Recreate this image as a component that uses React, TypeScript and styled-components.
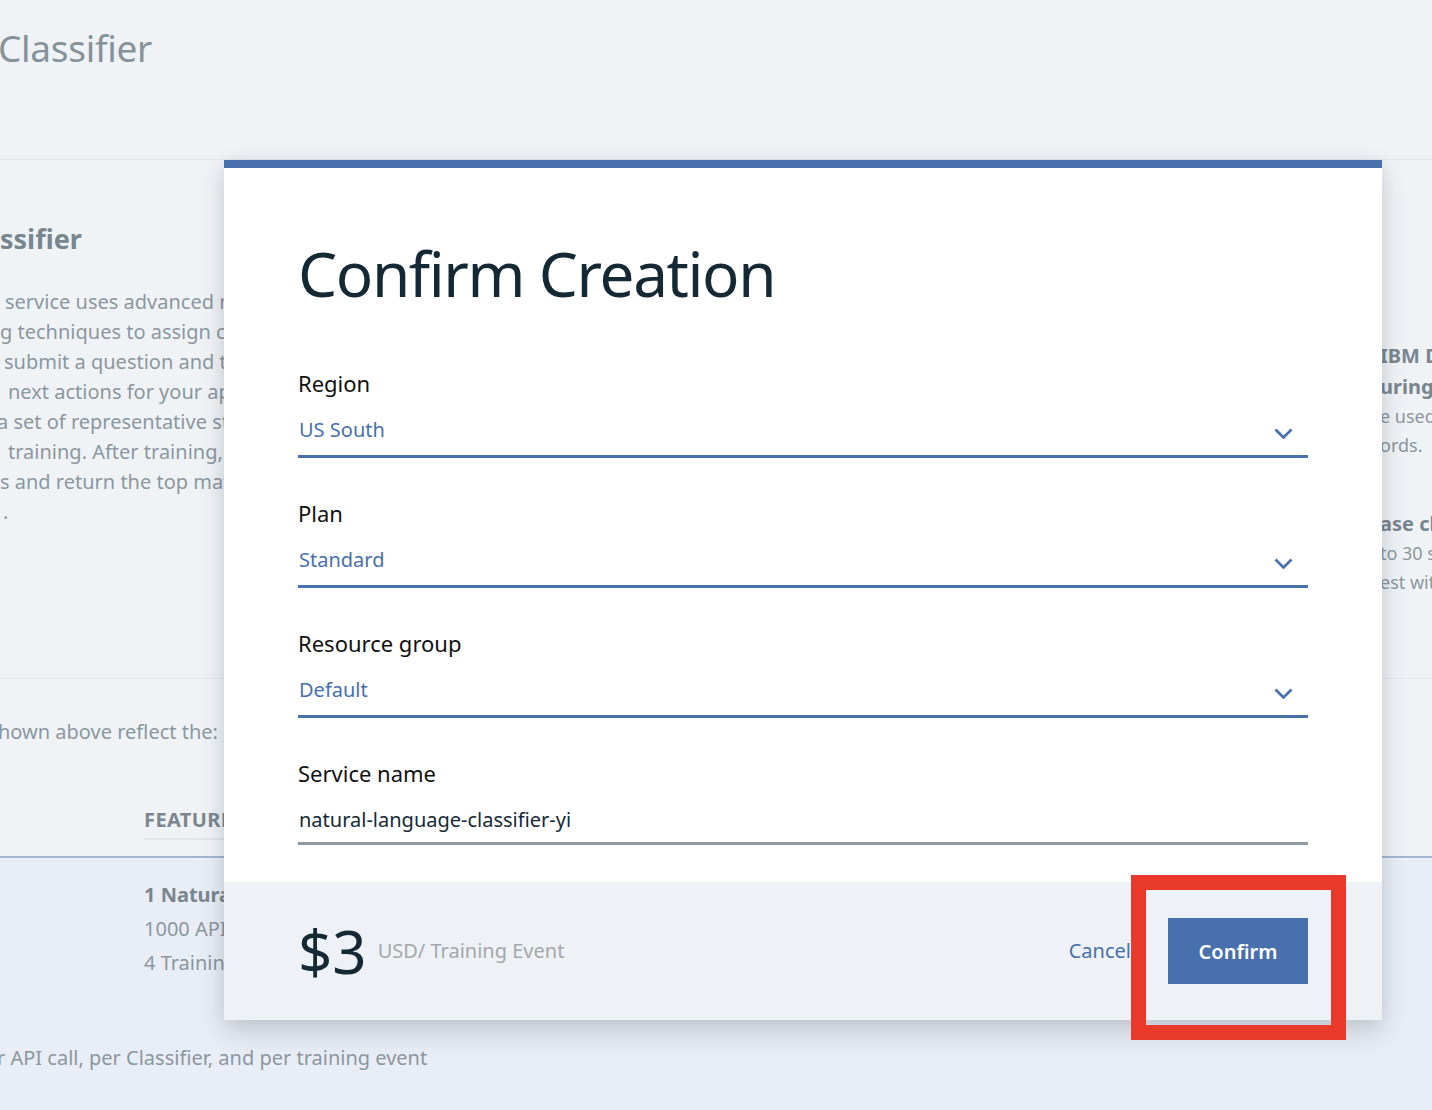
import React from "react";
import styled, { createGlobalStyle } from "styled-components";

const GlobalStyle = createGlobalStyle`
  *, *::before, *::after { box-sizing: border-box; }
  html, body { margin: 0; padding: 0; overflow: hidden; }
  body { font-family: "Noto Sans", "Open Sans", sans-serif; background: #f0f3f6; }
`;

const Page = styled.div`
  position: relative;
  width: 1432px;
  height: 1110px;
  overflow: hidden;
  background: #f0f3f6;
  font-family: "Noto Sans", "Open Sans", sans-serif;
  display: flex;
  flex-direction: column;
`;

const Header = styled.header`
  flex: 0 0 160px;
  padding-top: 23px;
  border-bottom: 1px solid #e2e7eb;
`;

const PageTitle = styled.h1`
  margin: 0 0 0 -2px;
  font-size: 37px;
  line-height: 50px;
  font-weight: 400;
  letter-spacing: -0.3px;
  color: #869299;
  white-space: nowrap;
`;

const Intro = styled.section`
  flex: 0 0 519px;
  display: flex;
  border-bottom: 1px solid #e2e7eb;
`;

const LeftCol = styled.div`
  flex: 0 0 1380px;
  overflow: hidden;
  padding-top: 61px;
`;

const IntroHeading = styled.h2`
  margin: 0 0 30px;
  font-size: 27px;
  line-height: 36px;
  font-weight: 700;
  color: #78868f;
  white-space: nowrap;
`;

const ParaLine = styled.div<{ $indent: number }>`
  margin-left: ${(p) => p.$indent}px;
  font-size: 20px;
  line-height: 30px;
  color: #8b979f;
  white-space: nowrap;
`;

const RightCol = styled.div`
  flex: 1;
  overflow: hidden;
  padding-top: 180px;
  display: flex;
  flex-direction: column;
  gap: 48px;
`;

const Callout = styled.div`
  display: flex;
  flex-direction: column;
`;

const CalloutTitle = styled.div`
  font-size: 20px;
  line-height: 31px;
  font-weight: 700;
  color: #78868f;
  white-space: nowrap;
`;

const CalloutText = styled.div`
  font-size: 18px;
  line-height: 29px;
  color: #8b979f;
  white-space: nowrap;
`;

const Pricing = styled.section`
  flex: 0 0 180px;
  padding-top: 38px;
`;

const PricingIntro = styled.div`
  margin-left: -2px;
  font-size: 20px;
  line-height: 30px;
  color: #8b979f;
  white-space: nowrap;
`;

const TableHead = styled.div`
  margin-top: 58px;
  padding: 0 0 16px 144px;
  border-bottom: 2px solid #a2b5d2;
`;

const HeadCell = styled.div`
  width: 640px;
  padding-bottom: 3px;
  border-bottom: 2px solid #e1e5e9;
  font-size: 20px;
  line-height: 30px;
  font-weight: 700;
  letter-spacing: 0.4px;
  color: #7b8790;
`;

const Lower = styled.section`
  flex: 1;
  background: #e9edf5;
  padding-top: 19px;
`;

const Rows = styled.div`
  padding-left: 144px;
`;

const Row = styled.div<{ $bold?: boolean }>`
  font-size: 20px;
  line-height: 34px;
  font-weight: ${(p) => (p.$bold ? 700 : 400)};
  color: ${(p) => (p.$bold ? "#7b8790" : "#8b979f")};
  white-space: nowrap;
`;

const Note = styled.div`
  margin: 63px 0 0 -3px;
  font-size: 20px;
  line-height: 30px;
  color: #8b979f;
  white-space: nowrap;
`;

const Modal = styled.div`
  position: absolute;
  left: 224px;
  top: 160px;
  width: 1158px;
  background: #ffffff;
  border-top: 8px solid #4870ad;
  box-shadow: 0 12px 24px rgba(40, 50, 60, 0.18), 0 0 16px rgba(40, 50, 60, 0.06);
  font-family: "Noto Sans", "Open Sans", sans-serif;
`;

const ModalBody = styled.div`
  padding: 69px 74px 37px;
  display: flex;
  flex-direction: column;
`;

const ModalHeading = styled.h2`
  margin: 0 0 59px;
  font-size: 62px;
  line-height: 72px;
  font-weight: 400;
  letter-spacing: -1.4px;
  color: #152935;
`;

const Field = styled.div`
  display: flex;
  flex-direction: column;
  margin-bottom: 40px;
  &:last-child { margin-bottom: 0; }
`;

const FieldLabel = styled.div`
  margin-bottom: 17px;
  font-size: 22px;
  line-height: 30px;
  color: #111111;
`;

const FieldBox = styled.div<{ $select?: boolean }>`
  display: flex;
  align-items: center;
  justify-content: space-between;
  padding-bottom: ${(p) => (p.$select ? 10 : 7)}px;
  border-bottom: 3px solid ${(p) => (p.$select ? "#4870ad" : "#8d9aa4")};
`;

const FieldValue = styled.div<{ $select?: boolean }>`
  padding-left: 1px;
  font-size: 20px;
  line-height: 30px;
  color: ${(p) => (p.$select ? "#4870ad" : "#152935")};
`;

const ChevronIcon = styled.svg`
  width: 19px;
  height: 11px;
  margin: 6px 15px 0 0;
`;

const Footer = styled.div`
  height: 138px;
  background: #eef1f5;
  padding: 0 74px;
  display: flex;
  align-items: center;
`;

const Price = styled.span`
  font-size: 60px;
  line-height: 60px;
  color: #152935;
`;

const PriceUnit = styled.span`
  margin-left: 11px;
  font-size: 20px;
  line-height: 30px;
  color: #a4a8ac;
`;

const CancelButton = styled.button`
  margin-left: auto;
  margin-right: 37px;
  padding: 0;
  border: none;
  background: none;
  font-family: inherit;
  font-size: 20px;
  line-height: 30px;
  color: #4870ad;
  cursor: pointer;
`;

const ConfirmButton = styled.button`
  width: 140px;
  height: 66px;
  border: none;
  background: #4870ad;
  color: #ffffff;
  font-family: inherit;
  font-size: 20px;
  font-weight: 600;
  cursor: pointer;
`;

const Highlight = styled.div`
  position: absolute;
  left: 1131px;
  top: 875px;
  width: 215px;
  height: 165px;
  border: 15px solid #e8392a;
  pointer-events: none;
`;

const Chevron = () => (
  <ChevronIcon viewBox="0 0 19 11" fill="none">
    <polyline points="1.5,1.5 9.5,9.5 17.5,1.5" stroke="#4870ad" strokeWidth="2.7" />
  </ChevronIcon>
);

const paragraph: { text: string; indent: number }[] = [
  { text: "service uses advanced machine learning", indent: 5 },
  { text: "g techniques to assign custom labels to", indent: 0 },
  { text: "submit a question and the service", indent: 4 },
  { text: "next actions for your application", indent: 8 },
  { text: "a set of representative strings", indent: -3 },
  { text: "training. After training, the", indent: 8 },
  { text: "s and return the top matches", indent: 0 },
  { text: ".", indent: 3 },
];

const fields = [
  { label: "Region", value: "US South", select: true },
  { label: "Plan", value: "Standard", select: true },
  { label: "Resource group", value: "Default", select: true },
  { label: "Service name", value: "natural-language-classifier-yi", select: false },
];

export default function App() {
  return (
    <>
      <GlobalStyle />
      <Page>
        <Header>
          <PageTitle>Classifier</PageTitle>
        </Header>
        <Intro>
          <LeftCol>
            <IntroHeading>ssifier</IntroHeading>
            {paragraph.map((l, i) => (
              <ParaLine key={i} $indent={l.indent}>
                {l.text}
              </ParaLine>
            ))}
          </LeftCol>
          <RightCol>
            <Callout>
              <CalloutTitle>IBM Db2</CalloutTitle>
              <CalloutTitle>uring data</CalloutTitle>
              <CalloutText>e used to</CalloutText>
              <CalloutText>ords.</CalloutText>
            </Callout>
            <Callout>
              <CalloutTitle>ase classes</CalloutTitle>
              <CalloutText>to 30 sec</CalloutText>
              <CalloutText>est with</CalloutText>
            </Callout>
          </RightCol>
        </Intro>
        <Pricing>
          <PricingIntro>hown above reflect the:</PricingIntro>
          <TableHead>
            <HeadCell>FEATURES</HeadCell>
          </TableHead>
        </Pricing>
        <Lower>
          <Rows>
            <Row $bold>1 Natural Language Classifier</Row>
            <Row>1000 API calls</Row>
            <Row>4 Training events</Row>
          </Rows>
          <Note>r API call, per Classifier, and per training event</Note>
        </Lower>

        <Modal>
          <ModalBody>
            <ModalHeading>Confirm Creation</ModalHeading>
            {fields.map((f) => (
              <Field key={f.label}>
                <FieldLabel>{f.label}</FieldLabel>
                <FieldBox $select={f.select}>
                  <FieldValue $select={f.select}>{f.value}</FieldValue>
                  {f.select && <Chevron />}
                </FieldBox>
              </Field>
            ))}
          </ModalBody>
          <Footer>
            <Price>$3</Price>
            <PriceUnit>USD/ Training Event</PriceUnit>
            <CancelButton>Cancel</CancelButton>
            <ConfirmButton>Confirm</ConfirmButton>
          </Footer>
        </Modal>
        <Highlight />
      </Page>
    </>
  );
}
